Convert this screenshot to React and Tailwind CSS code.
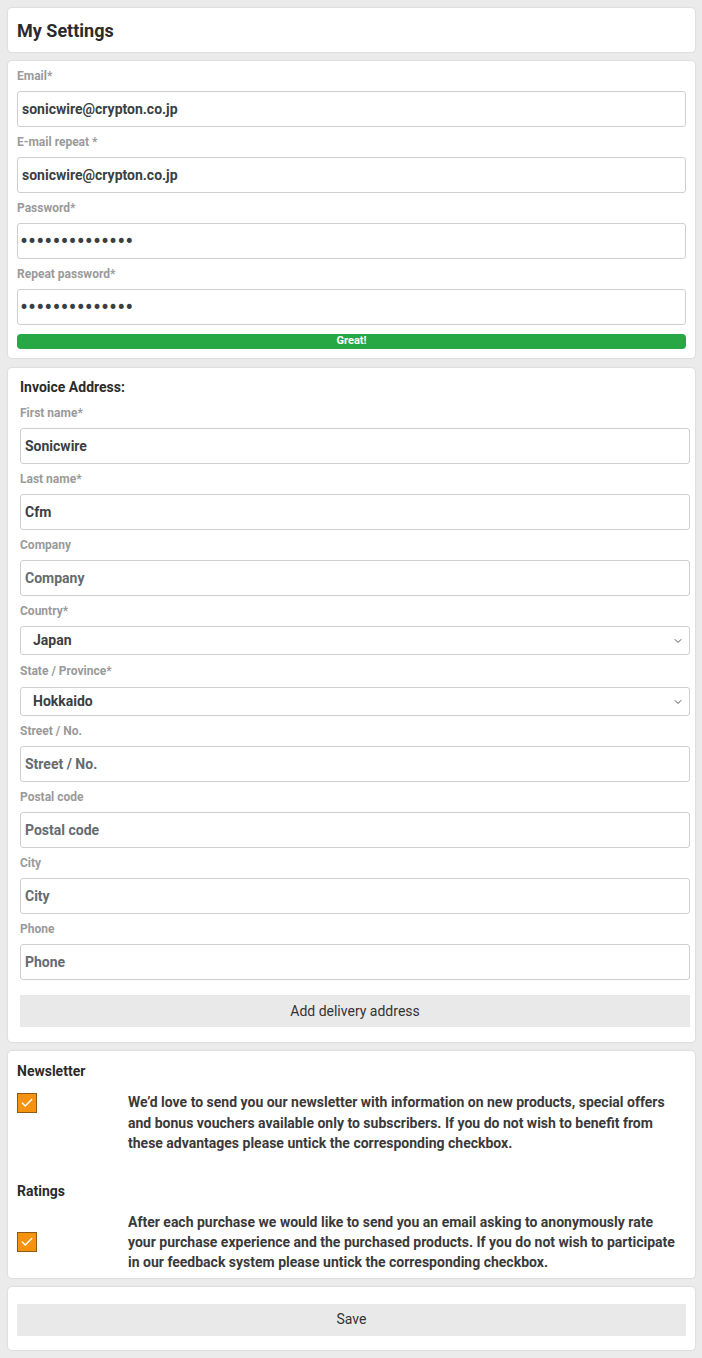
import { ChevronDown, Check } from 'lucide-react';

const font = { fontFamily: 'Roboto, "Liberation Sans", sans-serif' };

function Label({ children, h = 'h-[30px]' }) {
  return <div className={`${h} flex items-center text-[12px] font-bold text-[#9a9a9a]`}>{children}</div>;
}

function TextField({ label, value, placeholder }) {
  return (
    <div>
      <Label>{label}</Label>
      <input
        type="text"
        readOnly
        defaultValue={value}
        placeholder={placeholder}
        className="block w-full h-[36px] px-[4px] border border-[#cfcfcf] rounded-[3px] bg-white text-[14px] font-bold text-[#3a3f44] placeholder:text-[#666b70] outline-none"
        style={font}
      />
    </div>
  );
}

function PasswordField({ label }) {
  return (
    <div>
      <Label>{label}</Label>
      <input
        type="password"
        readOnly
        defaultValue="abcdefghijklmn"
        className="block w-full h-[36px] px-[2px] border border-[#cfcfcf] rounded-[3px] bg-white text-[24px] text-[#3a3f44] outline-none"
        style={font}
      />
    </div>
  );
}

function SelectField({ label, value, h }) {
  return (
    <div>
      <Label h={h}>{label}</Label>
      <div className="relative">
        <select
          defaultValue={value}
          className="block w-full h-[29px] pl-[12px] pr-8 appearance-none border border-[#cfcfcf] rounded-[3px] bg-white text-[14px] font-bold text-[#3a3f44] outline-none"
          style={font}
        >
          <option>{value}</option>
        </select>
        <ChevronDown className="absolute right-[6px] top-[9px] w-[12px] h-[12px] text-[#555] pointer-events-none" strokeWidth={2} />
      </div>
    </div>
  );
}

function Card({ className = '', children }) {
  return (
    <div className={`bg-white rounded-[4px] shadow-[0_0_2px_rgba(0,0,0,0.18)] ${className}`}>{children}</div>
  );
}

function OrangeCheck() {
  return (
    <div className="w-[20px] h-[20px] bg-[#f5930f] border border-[#8c5b16] flex items-center justify-center shrink-0">
      <Check className="w-[14px] h-[14px] text-white" strokeWidth={2.5} />
    </div>
  );
}

export default function App() {
  return (
    <div className="min-h-screen bg-[#ebebeb] pl-[8px] pr-[7px] pt-[8px] pb-[8px] flex flex-col gap-[9px]" style={font}>
      <Card className="h-[44px] flex items-center px-[9px]">
        <h1 className="text-[18px] font-bold text-[#2b2b2b]">My Settings</h1>
      </Card>

      <Card className="px-[9px] pb-[9px]">
        <TextField label="Email*" value="sonicwire@crypton.co.jp" />
        <TextField label="E-mail repeat *" value="sonicwire@crypton.co.jp" />
        <PasswordField label="Password*" />
        <PasswordField label="Repeat password*" />
        <div className="mt-[9px] h-[15px] rounded-[4px] bg-[#28a745] flex items-center justify-center text-[11px] font-bold text-white">
          Great!
        </div>
      </Card>

      <Card className="pl-[12px] pr-[5px] pb-[15px] mt-[1px]">
        <div className="h-[38px] pt-[1px] flex items-center text-[14px] font-bold text-[#2b2b2b]">Invoice Address:</div>
        <div className="-mt-[8px]">
          <TextField label="First name*" value="Sonicwire" />
        </div>
        <TextField label="Last name*" value="Cfm" />
        <TextField label="Company" placeholder="Company" />
        <SelectField label="Country*" value="Japan" />
        <SelectField label="State / Province*" value="Hokkaido" h="h-[32px]" />
        <TextField label="Street / No." placeholder="Street / No." />
        <TextField label="Postal code" placeholder="Postal code" />
        <TextField label="City" placeholder="City" />
        <TextField label="Phone" placeholder="Phone" />
        <button className="mt-[15px] w-full h-[32px] bg-[#e9e9e9] text-[14px] text-[#333]">Add delivery address</button>
      </Card>

      <Card className="px-[9px] pt-[10px] pb-[6px]">
        <div className="text-[14px] font-bold text-[#2b2b2b] leading-[20px]">Newsletter</div>
        <div className="mt-[11px] flex items-start">
          <div className="w-[111px] shrink-0 pt-[1px]">
            <OrangeCheck />
          </div>
          <p className="text-[14px] font-bold text-[#3a3a3a] leading-[20.5px] pr-[6px]">
            We’d love to send you our newsletter with information on new products, special offers and bonus vouchers available only to subscribers. If you do not wish to benefit from these advantages please untick the corresponding checkbox.
          </p>
        </div>
        <div className="mt-[27px] text-[14px] font-bold text-[#2b2b2b] leading-[20px]">Ratings</div>
        <div className="mt-[11px] flex items-center">
          <div className="w-[111px] shrink-0">
            <OrangeCheck />
          </div>
          <p className="text-[14px] font-bold text-[#3a3a3a] leading-[20px] pr-[6px]">
            After each purchase we would like to send you an email asking to anonymously rate your purchase experience and the purchased products. If you do not wish to participate in our feedback system please untick the corresponding checkbox.
          </p>
        </div>
      </Card>

      <Card className="px-[9px] pt-[17px] pb-[14px]">
        <button className="w-full h-[32px] bg-[#e9e9e9] text-[14px] text-[#333]">Save</button>
      </Card>
    </div>
  );
}
